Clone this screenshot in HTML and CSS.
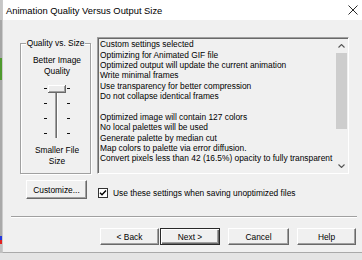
FILE: index.html
```html
<!DOCTYPE html>
<html>
<head>
<meta charset="utf-8">
<link rel="stylesheet" href="styles.css">
</head>
<body>
<div class="desktop">
  <div class="main">
    <div class="strip">
      <div class="seg seg-a"></div>
      <div class="seg seg-b"></div>
      <div class="seg seg-green"></div>
      <div class="seg seg-c"></div>
      <div class="seg seg-blue"></div>
      <div class="seg seg-red"></div>
      <div class="seg seg-d"></div>
    </div>
    <div class="window">
      <div class="titlebar">
        <span class="title">Animation Quality Versus Output Size</span>
        <svg class="close" width="10" height="10" viewBox="0 0 10 10"><path d="M0.5 0.5L9.5 9.5M9.5 0.5L0.5 9.5" stroke="#111" stroke-width="0.9" fill="none"/></svg>
      </div>
      <div class="content">
        <div class="top">
          <div class="group">
            <div class="legend">Quality vs. Size</div>
            <div class="glabel better">Better Image<br>Quality</div>
            <svg class="slider" width="69" height="58" viewBox="0 0 69 58">
              <rect x="23" y="6" width="3" height="1" fill="#111"/>
              <rect x="23" y="21" width="3" height="1" fill="#111"/>
              <rect x="23" y="36" width="3" height="1" fill="#111"/>
              <rect x="23" y="51" width="3" height="1" fill="#111"/>
              <rect x="46" y="6" width="3" height="1" fill="#111"/>
              <rect x="46" y="21" width="3" height="1" fill="#111"/>
              <rect x="46" y="36" width="3" height="1" fill="#111"/>
              <rect x="46" y="51" width="3" height="1" fill="#111"/>
              <rect x="34" y="8" width="1" height="48" fill="#a0a0a0"/>
              <rect x="35" y="8" width="1" height="48" fill="#6d6d6d"/>
              <rect x="36" y="8" width="1" height="48" fill="#ffffff"/>
              <rect x="27" y="3" width="18" height="8" fill="#ececec"/>
              <rect x="27" y="3" width="18" height="1" fill="#ffffff"/>
              <rect x="27" y="3" width="1" height="8" fill="#ffffff"/>
              <rect x="27" y="10" width="18" height="1" fill="#696969"/>
              <rect x="44" y="3" width="1" height="8" fill="#696969"/>
              <rect x="28" y="9" width="16" height="1" fill="#a0a0a0"/>
              <rect x="43" y="4" width="1" height="6" fill="#a0a0a0"/>
            </svg>
            <div class="glabel smaller">Smaller File<br>Size</div>
          </div>
          <div class="textbox">
            <div class="lines">
              <div>Custom settings selected</div>
              <div>Optimizing for Animated GIF file</div>
              <div>Optimized output will update the current animation</div>
              <div>Write minimal frames</div>
              <div>Use transparency for better compression</div>
              <div>Do not collapse identical frames</div>
              <div>&nbsp;</div>
              <div>Optimized image will contain 127 colors</div>
              <div>No local palettes will be used</div>
              <div>Generate palette by median cut</div>
              <div>Map colors to palette via error diffusion.</div>
              <div>Convert pixels less than 42 (16.5%) opacity to fully transparent</div>
            </div>
            <div class="scrollbar">
              <div class="sb-btn"><svg width="7" height="4" viewBox="0 0 7 4"><path d="M0.5 3.5L3.5 0.5L6.5 3.5" stroke="#555" stroke-width="1.1" fill="none"/></svg></div>
              <div class="thumb"></div>
              <div class="sb-track"></div>
              <div class="sb-btn"><svg width="7" height="4" viewBox="0 0 7 4"><path d="M0.5 0.5L3.5 3.5L6.5 0.5" stroke="#555" stroke-width="1.1" fill="none"/></svg></div>
            </div>
          </div>
        </div>
        <div class="mid">
          <div class="btn customize">Customize...</div>
          <div class="check">
            <span class="box"><svg width="8" height="8" viewBox="0 0 8 8"><path d="M1 3.8L3 5.8L7 1.5" stroke="#000" stroke-width="1.4" fill="none"/></svg></span>
            <span class="check-label">Use these settings when saving unoptimized files</span>
          </div>
        </div>
        <div class="sep"></div>
        <div class="buttons">
          <div class="btn back">&lt; Back</div>
          <div class="btn next">Next &gt;</div>
          <div class="btn cancel">Cancel</div>
          <div class="btn help">Help</div>
        </div>
      </div>
    </div>
  </div>
  <div class="below"></div>
</div>
</body>
</html>
```
FILE: styles.css
```css
* { box-sizing: border-box; }
html, body { margin: 0; padding: 0; }
body {
  width: 362px;
  height: 260px;
  overflow: hidden;
  font-family: "Liberation Sans", Arial, sans-serif;
  font-size: 8.4px;
  color: #000;
  background: #e6e6e6;
}
.desktop { display: flex; flex-direction: column; height: 260px; }
.main { display: flex; height: 253px; }
.below { flex: 1; background: #e4e4e4; }

.strip { width: 2px; display: flex; flex-direction: column; }
.seg-a { height: 20px; background: #c6c6c6; }
.seg-b { height: 38px; background: #a6a6a6; }
.seg-green { height: 22px; background: #4f9a2e; }
.seg-c { height: 156px; background: #a9a9a9; }
.seg-blue { height: 4px; background: #2438e0; }
.seg-red { height: 4px; background: #e02020; }
.seg-d { flex: 1; background: #c0c0c0; }

.window {
  flex: 1;
  min-width: 0;
  display: flex;
  flex-direction: column;
  background: #f0f0f0;
  border-left: 1px solid #cbcbcb;
  border-bottom: 1px solid #a9a9a9;
}
.titlebar {
  height: 20px;
  flex: 0 0 20px;
  background: #fff;
  display: flex;
  align-items: center;
  justify-content: space-between;
  padding: 0 4px 0 3px;
}
.title { font-size: 9.4px; color: #000; }
.close { display: block; }

.content {
  flex: 1;
  display: flex;
  flex-direction: column;
  padding: 17px 0 0 8px;
}

.top { display: flex; gap: 6px; height: 137px; margin-left: 9px; }

.group {
  width: 71px;
  margin-top: 6px;
  border: 1px solid #a0a0a0;
  box-shadow: inset 1px 1px #fff, 1px 1px #fff;
  display: flex;
  flex-direction: column;
  align-items: center;
}
.legend {
  margin-top: -6.5px;
  line-height: 11px;
  background: #f0f0f0;
  padding: 0 1px;
}
.glabel {
  line-height: 11px;
  text-align: center;
  padding-left: 3px;
}
.better { margin-top: 6px; }
.slider { display: block; margin-top: 5.5px; }
.smaller { margin-top: 4.5px; }

.textbox {
  width: 252px;
  border: 1px solid;
  border-color: #a0a0a0 #fff #fff #a0a0a0;
  box-shadow: inset 1px 1px #696969;
  display: flex;
  background: #f0f0f0;
}
.lines {
  flex: 1;
  min-width: 0;
  overflow: hidden;
  padding: 1.4px 0 0 2px;
  line-height: 10.36px;
  white-space: nowrap;
}
.scrollbar {
  width: 13px;
  display: flex;
  flex-direction: column;
  padding-top: 1px;
}
.sb-btn {
  height: 14px;
  display: flex;
  align-items: center;
  justify-content: center;
}
.sb-btn svg { display: block; }
.thumb { height: 76px; background: #cdcdcd; margin: 0 1px; }
.sb-track { flex: 1; }

.mid { display: flex; align-items: flex-start; margin-top: 6px; height: 19px; }
.btn {
  display: flex;
  align-items: center;
  justify-content: center;
  background: #f0f0f0;
  border: 1px solid;
  border-color: #fff #696969 #696969 #fff;
  box-shadow: inset -1px -1px #a0a0a0;
  color: #000;
}
.customize { width: 61px; height: 19px; margin-left: 15px; }
.check { display: flex; align-items: center; margin-left: 11px; margin-top: 8px; }
.box {
  width: 10px;
  height: 10px;
  border: 1px solid #333;
  background: #fff;
  display: flex;
  align-items: center;
  justify-content: center;
}
.box svg { display: block; }
.check-label { margin-left: 5px; line-height: 10px; }

.sep {
  width: 346px;
  height: 2px;
  margin-top: 17px;
  border-top: 1px solid #a0a0a0;
  border-bottom: 1px solid #fff;
}

.buttons { display: flex; margin-top: 10px; height: 17px; margin-left: 89px; }
.buttons .btn { height: 17px; }
.back { width: 59px; }
.next {
  width: 60px;
  margin-left: 1px;
  border: 1px solid #2a2a2a;
  box-shadow: inset 1px 1px #fff, inset -1px -1px #696969, inset -2px -2px #a0a0a0;
}
.cancel { width: 61px; margin-left: 8px; }
.help { width: 59px; margin-left: 8px; }
```
